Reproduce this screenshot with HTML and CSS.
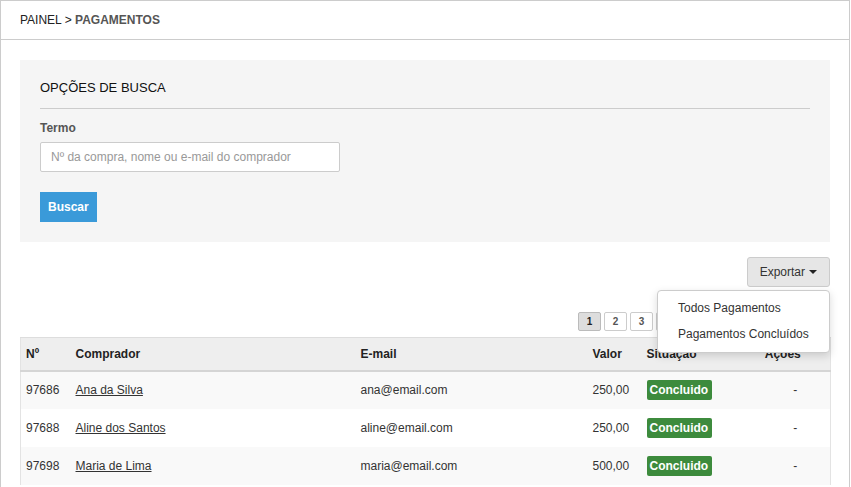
FILE: index.html
```html
<!DOCTYPE html>
<html lang="pt-BR">
<head>
<meta charset="utf-8">
<title>Pagamentos</title>
<link rel="stylesheet" href="styles.css">
</head>
<body>
<div class="frame">
  <div class="crumbs">PAINEL &gt; <strong>PAGAMENTOS</strong></div>
  <div class="content">
    <section class="search">
      <h2 class="search-title">OPÇÕES DE BUSCA</h2>
      <hr class="search-rule">
      <label class="field-label" for="termo">Termo</label>
      <input class="field-input" id="termo" type="text" placeholder="Nº da compra, nome ou e-mail do comprador">
      <button class="btn-primary" type="button">Buscar</button>
    </section>

    <div class="toolbar">
      <div class="export">
        <button class="btn-export" type="button">Exportar <span class="caret"></span></button>
        <ul class="dropdown">
          <li>Todos Pagamentos</li>
          <li>Pagamentos Concluídos</li>
        </ul>
      </div>
    </div>

    <div class="pager">
      <span class="page active">1</span>
      <span class="page">2</span>
      <span class="page">3</span>
      <span class="page">4</span>
      <span class="page">5</span>
      <span class="page">6</span>
      <span class="page">7</span>
      <span class="page">8</span>
      <span class="page">9</span>
      <span class="page small">»</span>
    </div>

    <table class="grid">
      <colgroup>
        <col class="c-num"><col class="c-buyer"><col class="c-mail"><col class="c-val"><col class="c-status"><col class="c-act">
      </colgroup>
      <thead>
        <tr><th>Nº</th><th>Comprador</th><th>E-mail</th><th>Valor</th><th>Situação</th><th class="center">Ações</th></tr>
      </thead>
      <tbody>
        <tr><td>97686</td><td><a href="#">Ana da Silva</a></td><td>ana@email.com</td><td>250,00</td><td><span class="badge">Concluido</span></td><td class="dash">-</td></tr>
        <tr><td>97688</td><td><a href="#">Aline dos Santos</a></td><td>aline@email.com</td><td>250,00</td><td><span class="badge">Concluido</span></td><td class="dash">-</td></tr>
        <tr><td>97698</td><td><a href="#">Maria de Lima</a></td><td>maria@email.com</td><td>500,00</td><td><span class="badge">Concluido</span></td><td class="dash">-</td></tr>
      </tbody>
    </table>
  </div>
</div>
</body>
</html>
```

FILE: styles.css
```css
* { box-sizing: border-box; }
html, body { margin: 0; padding: 0; background: #fff; }
body {
  font-family: "Liberation Sans", Arial, Helvetica, sans-serif;
  font-size: 12px;
  color: #333;
}
.frame {
  width: 850px;
  min-height: 487px;
  border: 1px solid #ccc;
  border-bottom: 0;
}
.crumbs {
  padding: 10px 19px;
  line-height: 18px;
  color: #222;
  border-bottom: 1px solid #ccc;
}
.crumbs strong { color: #555; }
.content { padding: 20px 19px 0; }

.search {
  background: #f5f5f5;
  padding: 19px 20px 20px;
  display: flex;
  flex-direction: column;
  align-items: flex-start;
}
.search-title {
  margin: 0;
  font-size: 13px;
  font-weight: normal;
  line-height: 18px;
  color: #111;
}
.search-rule {
  align-self: stretch;
  border: 0;
  border-top: 1px solid #ccc;
  margin: 11px 0 0;
  height: 0;
}
.field-label {
  margin-top: 11px;
  font-weight: bold;
  color: #555;
  line-height: 16px;
}
.field-input {
  margin-top: 6px;
  width: 300px;
  height: 30px;
  border: 1px solid #ccc;
  border-radius: 2px;
  padding: 0 10px;
  font: 12px "Liberation Sans", Arial, sans-serif;
  background: #fff;
  color: #333;
}
.field-input::placeholder { color: #999; }
.btn-primary {
  margin-top: 20px;
  height: 30px;
  padding: 0 8px;
  border: 0;
  background: #3a9ad9;
  color: #fff;
  font: bold 12px "Liberation Sans", Arial, sans-serif;
}

.toolbar {
  display: flex;
  justify-content: flex-end;
  margin-top: 15px;
}
.export { position: relative; }
.btn-export {
  height: 30px;
  width: 83px;
  border: 1px solid #ccc;
  border-radius: 3px;
  background: #e6e6e6;
  color: #333;
  font: 12px "Liberation Sans", Arial, sans-serif;
  padding: 0;
}
.caret {
  display: inline-block;
  width: 0; height: 0;
  border-left: 4px solid transparent;
  border-right: 4px solid transparent;
  border-top: 4px solid #222;
  vertical-align: middle;
  margin-left: 1px;
  margin-top: -2px;
}
.dropdown {
  position: absolute;
  right: 0;
  top: 33px;
  width: 173px;
  margin: 0;
  padding: 4px 0 5px;
  list-style: none;
  background: #fff;
  border: 1px solid #ccc;
  border-radius: 4px;
  box-shadow: 0 3px 8px rgba(0,0,0,0.15);
  z-index: 2;
}
.dropdown li {
  line-height: 26px;
  padding: 0 20px;
  color: #333;
  white-space: nowrap;
}

.pager {
  display: flex;
  justify-content: flex-end;
  gap: 3px;
  margin-top: 25px;
}
.page {
  width: 23px;
  height: 19px;
  border: 1px solid #ccc;
  border-radius: 2px;
  background: #fff;
  color: #555;
  font-size: 10px;
  font-weight: bold;
  display: flex;
  align-items: center;
  justify-content: center;
}
.page.active { background: #ddd; color: #222; border-color: #bbb; }
.page.small { width: 18px; }

.grid {
  margin-top: 6px;
  width: 810px;
  border-collapse: collapse;
  table-layout: fixed;
  border-left: 1px solid #e3e3e3;
  border-right: 1px solid #e3e3e3;
}
.c-num { width: 50px; }
.c-buyer { width: 285px; }
.c-mail { width: 232px; }
.c-val { width: 54px; }
.c-status { width: 94px; }
.c-act { width: 95px; }
.grid th {
  background: #eee;
  border-top: 1px solid #ddd;
  border-bottom: 2px solid #d5d5d5;
  text-align: left;
  font-weight: bold;
  height: 33px;
  padding: 0 5px;
  color: #222;
}
.grid th.center { text-align: center; }
.grid td {
  height: 38px;
  padding: 0 5px;
  color: #333;
}
.grid tbody tr:nth-child(odd) td { background: #f9f9f9; }
.grid a { color: #333; text-decoration: underline; }
.grid td.dash { text-align: center; padding-left: 30px; }
.badge {
  display: inline-block;
  background: #3d8b3d;
  color: #fff;
  font-weight: bold;
  line-height: 20px;
  padding: 0 4px 0 3px;
  border-radius: 2px;
}
```
